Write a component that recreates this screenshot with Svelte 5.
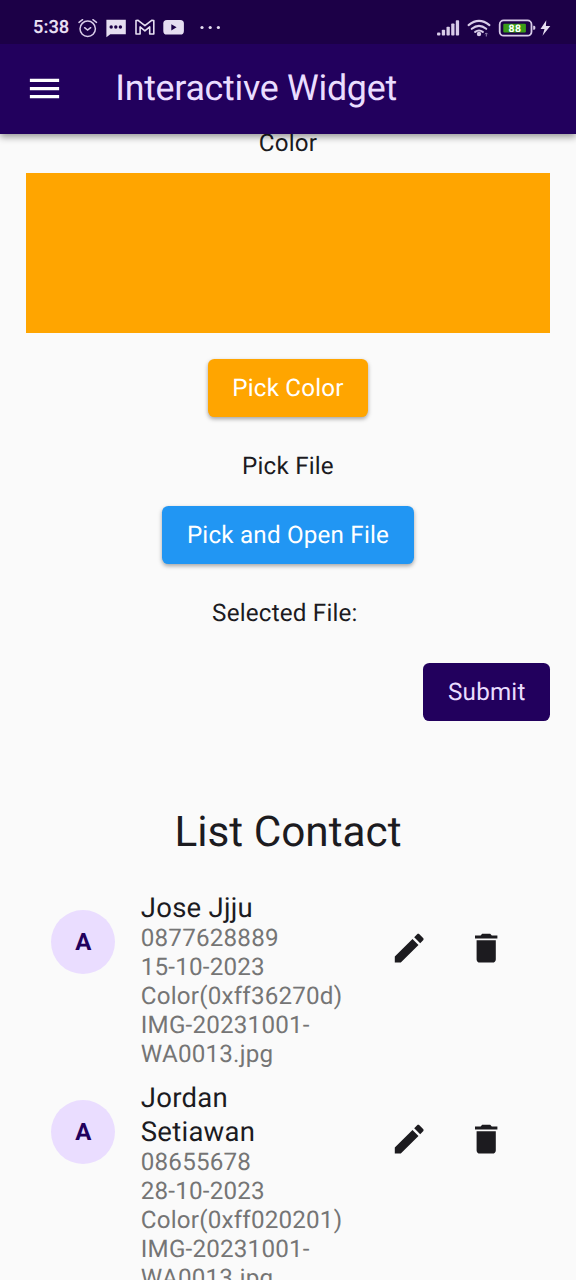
<script>
  const contacts = [
    {
      initial: 'A',
      name: 'Jose Jjju',
      phone: '0877628889',
      date: '15-10-2023',
      color: 'Color(0xff36270d)',
      file: 'IMG-20231001-WA0013.jpg',
    },
    {
      initial: 'A',
      name: 'Jordan Setiawan',
      phone: '08655678',
      date: '28-10-2023',
      color: 'Color(0xff020201)',
      file: 'IMG-20231001-WA0013.jpg',
    },
  ];
</script>

<div class="screen">
  <header>
    <div class="status">
      <span class="time">5:38</span>
      <svg class="left-icons" width="160" height="24" viewBox="72 16 160 24" fill="none">
        <g stroke="#d9cce9" stroke-width="1.5" stroke-linecap="round">
          <circle cx="87.7" cy="28.8" r="7.7" />
          <path d="M79 22.4l3.6-2.7M96.5 22.4l-3.6-2.7M84.6 27.7l3 2.4 3.1-2.4" />
        </g>
        <path d="M106.4 19.7h19.4v14.6h-15.5l-3.9 3z" fill="#e6def1" />
        <g fill="#1c0047">
          <circle cx="111.2" cy="27" r="1.7" />
          <circle cx="115.8" cy="27" r="1.7" />
          <circle cx="120.4" cy="27" r="1.7" />
        </g>
        <path d="M136 34V20.5l2.1-.2 6.8 5.3 6.8-5.3 2.1.2V34h-4.1v-7.1l-4.8 3.9-4.8-3.9V34z" stroke="#e6def1" stroke-width="1.6" stroke-linejoin="round" />
        <rect x="163.3" y="20" width="20.6" height="14.6" rx="3.6" fill="#e6def1" />
        <path d="M171.3 24.2v6.2l5.3-3.1z" fill="#1c0047" />
        <g fill="#e6def1">
          <circle cx="202" cy="27.5" r="1.6" />
          <circle cx="210.2" cy="27.5" r="1.6" />
          <circle cx="218.4" cy="27.5" r="1.6" />
        </g>
      </svg>
      <svg class="right-icons" width="120" height="24" viewBox="434 16 120 24" fill="none">
        <g fill="#d9cce9">
          <rect x="437" y="32.6" width="3.4" height="3" rx="1" />
          <rect x="441.8" y="29.8" width="3.3" height="5.8" rx=".8" />
          <rect x="446.5" y="26.7" width="3.3" height="8.9" rx=".8" />
          <rect x="451.2" y="23.4" width="3.3" height="12.2" rx=".8" />
          <rect x="455.8" y="20.2" width="3.3" height="15.4" rx=".8" />
          <circle cx="479" cy="34" r="2.2" />
        </g>
        <path d="M468.6 25.1q10.4-8.4 20.8 0M471.8 28.8q7.2-5.8 14.4 0M475.2 31.8q3.8-2.6 7.6 0" stroke="#d9cce9" stroke-width="2.1" stroke-linecap="round" />
        <path d="M486.3 33v3.5M485 34.2l1.3-1.3 1.3 1.3" stroke="#9280ae" stroke-width="1" />
        <rect x="499.7" y="20.4" width="31.8" height="15.3" rx="4" stroke="#d9cce9" stroke-width="1.8" />
        <rect x="503.3" y="23.8" width="22.6" height="8.6" rx="1" fill="#3b9c19" />
        <path d="M533.2 25.8h1q1.2 0 1.2 2t-1.2 2h-1z" fill="#d9cce9" />
        <text x="515" y="31.7" text-anchor="middle" font-size="10.5" font-weight="700" letter-spacing=".4" fill="#fff">88</text>
        <path d="M546.3 20.3l-5.8 8.6h4l-2 6.8 7.8-9.8h-4.4z" fill="#e6def1" />
      </svg>
    </div>
    <div class="bar">
      <svg width="39" height="39" viewBox="0 0 24 24" fill="#fff"><path d="M3 18h18v-2H3v2zm0-5h18v-2H3v2zm0-7v2h18V6H3z" /></svg>
      <h1>Interactive Widget</h1>
    </div>
  </header>

  <main>
    <p class="label first">Color</p>
    <div class="swatch"></div>
    <button class="orange">Pick Color</button>
    <p class="label">Pick File</p>
    <button class="blue">Pick and Open File</button>
    <p class="label selected">Selected File:&nbsp;</p>
    <button class="submit">Submit</button>
    <h2>List Contact</h2>
    <ul>
      {#each contacts as c}
        <li>
          <div class="avatar">{c.initial}</div>
          <div class="info">
            <div class="name">{c.name}</div>
            <div>{c.phone}</div>
            <div>{c.date}</div>
            <div>{c.color}</div>
            <div>{c.file}</div>
          </div>
          <div class="actions">
            <svg viewBox="0 0 24 24"><path d="M3 17.25V21h3.75L17.81 9.94l-3.75-3.75L3 17.25zM20.71 7.04c.39-.39.39-1.02 0-1.41l-2.34-2.34c-.39-.39-1.02-.39-1.41 0l-1.83 1.83 3.75 3.75 1.83-1.83z" /></svg>
            <svg viewBox="0 0 24 24"><path d="M6 19c0 1.1.9 2 2 2h8c1.1 0 2-.9 2-2V7H6v12zM19 4h-3.5l-1-1h-5l-1 1H5v2h14V4z" /></svg>
          </div>
        </li>
      {/each}
    </ul>
  </main>
</div>

<style>
  :global(body) {
    margin: 0;
  }
  .screen {
    width: 576px;
    height: 1280px;
    overflow: hidden;
    background: #fafafa;
    font-family: Roboto, sans-serif;
    text-rendering: geometricPrecision;
    color: #1c1b1f;
    display: flex;
    flex-direction: column;
  }
  header {
    height: 133.6px;
    flex: none;
    background: #22005d;
    box-shadow: 0 3px 7px rgba(0, 0, 0, 0.4);
    position: relative;
    z-index: 1;
  }
  .status {
    height: 44px;
    box-sizing: border-box;
    padding: 16px 22px 0 33px;
    background: #1c0047;
    display: flex;
    align-items: flex-start;
  }
  .time {
    width: 39px;
    font-size: 18.3px;
    line-height: 24px;
    font-weight: 600;
    color: #e6def1;
    white-space: nowrap;
  }
  .right-icons {
    margin-left: auto;
  }
  .bar {
    height: 89.6px;
    display: flex;
    align-items: center;
    padding-left: 25px;
    gap: 51.2px;
  }
  h1 {
    margin: 0 0 2px;
    font-size: 35.8px;
    line-height: 44px;
    font-weight: 400;
    letter-spacing: -0.28px;
    color: #eaddff;
  }
  main {
    flex: none;
    padding: 0 25.6px;
    display: flex;
    flex-direction: column;
    align-items: center;
  }
  .label {
    margin: 34.4px 0 25.2px;
    font-size: 24.2px;
    line-height: 30px;
    letter-spacing: 0.2px;
  }
  .label.first {
    margin: -5.6px 0 15.4px;
  }
  .label.selected {
    margin: 34px 0 35.3px;
  }
  .swatch {
    align-self: stretch;
    height: 160px;
    background: #ffa500;
    margin-bottom: 25.6px;
  }
  button {
    height: 57.6px;
    padding: 0 24.6px;
    border: 0;
    border-radius: 6.4px;
    font: 400 24.2px/30px Roboto, sans-serif;
    letter-spacing: 0.2px;
    text-rendering: inherit;
    color: #fff;
    box-shadow: 0 2px 4px rgba(0, 0, 0, 0.35);
  }
  .orange {
    background: #ffa500;
  }
  .blue {
    background: #2196f3;
  }
  .submit {
    align-self: flex-end;
    padding: 0 24.9px;
    background: #22005d;
    color: #eaddff;
    box-shadow: none;
  }
  h2 {
    margin: 84.2px 0 23.6px;
    font-size: 42.3px;
    line-height: 56px;
    font-weight: 400;
  }
  ul {
    list-style: none;
    margin: 0;
    padding: 0;
    align-self: stretch;
  }
  li {
    display: flex;
    padding: 6.4px 25.6px;
  }
  .avatar {
    width: 64px;
    height: 64px;
    margin: 19.2px 25.6px 0 0;
    border-radius: 50%;
    background: #eaddff;
    color: #22005d;
    font-size: 24px;
    font-weight: 700;
    line-height: 65px;
    text-align: center;
    flex: none;
  }
  .info {
    width: 204.8px;
    font-size: 24.2px;
    line-height: 28.8px;
    letter-spacing: 0.2px;
    color: #757575;
  }
  .name {
    width: 160px;
    font-size: 27.5px;
    line-height: 33.6px;
    letter-spacing: 0.25px;
    color: #1c1b1f;
  }
  .actions {
    display: flex;
    gap: 38.4px;
    margin: 38.4px 0 0 auto;
    padding-right: 19.2px;
  }
  .actions svg {
    width: 38.4px;
    height: 38.4px;
    fill: #1c1b1f;
  }
</style>
